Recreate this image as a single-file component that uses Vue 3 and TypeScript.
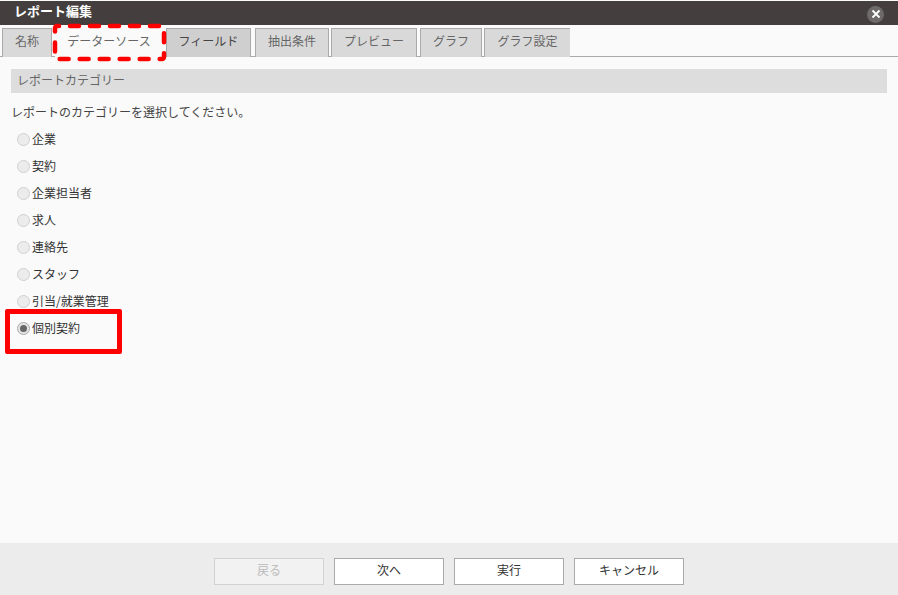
<script setup lang="ts">
const tabs: { label: string; active?: boolean; dark?: boolean; cls: string }[] = [
  { label: '名称', cls: 't1' },
  { label: 'データーソース', active: true, cls: 't2' },
  { label: 'フィールド', dark: true, cls: 't3' },
  { label: '抽出条件', cls: 't4' },
  { label: 'プレビュー', cls: 't5' },
  { label: 'グラフ', cls: 't6' },
  { label: 'グラフ設定', cls: 't7' },
]
const categories = ['企業', '契約', '企業担当者', '求人', '連絡先', 'スタッフ', '引当/就業管理', '個別契約']
const selected = '個別契約'
const buttons = [
  { label: '戻る', disabled: true },
  { label: '次へ' },
  { label: '実行' },
  { label: 'キャンセル' },
]
</script>

<template>
  <div class="dialog">
    <header class="titlebar">
      <span class="title">レポート編集</span>
      <button class="close" type="button" aria-label="閉じる">
        <svg width="10" height="10" viewBox="0 0 10 10">
          <path d="M1.5 1.5 8.5 8.5M8.5 1.5 1.5 8.5" stroke="#fff" stroke-width="1.8" fill="none" />
        </svg>
      </button>
    </header>

    <nav class="tabs">
      <div
        v-for="t in tabs"
        :key="t.label"
        class="tab"
        :class="[t.cls, { active: t.active, dark: t.dark }]"
      >{{ t.label }}</div>
    </nav>

    <main class="body">
      <h2 class="section">レポートカテゴリー</h2>
      <p class="lead">レポートのカテゴリーを選択してください。</p>
      <ul class="options">
        <li v-for="c in categories" :key="c" class="option">
          <span class="radio" :class="{ on: c === selected }"></span>
          <span class="opt-label">{{ c }}</span>
        </li>
      </ul>
    </main>

    <footer class="footer">
      <button
        v-for="b in buttons"
        :key="b.label"
        type="button"
        class="btn"
        :class="{ disabled: b.disabled }"
      >{{ b.label }}</button>
    </footer>

    <svg class="mark dashed" width="118" height="42" viewBox="0 0 118 42">
      <rect
        x="3"
        y="3"
        width="109"
        height="33"
        rx="2"
        fill="none"
        stroke="#f00"
        stroke-width="4.5"
        stroke-linecap="round"
        stroke-dasharray="9 11"
        stroke-dashoffset="7"
      />
    </svg>
    <div class="mark solid"></div>
  </div>
</template>

<style>
html, body { margin: 0; padding: 0; background: #fff; }
</style>

<style scoped>
.dialog {
  position: relative;
  width: 898px;
  height: 595px;
  display: flex;
  flex-direction: column;
  overflow: hidden;
  background: #fafafa;
  font-family: "Noto Sans CJK JP", "Noto Sans", sans-serif;
  font-size: 12px;
  color: #333;
}
.titlebar {
  margin-top: 1px;
  height: 24px;
  flex: none;
  background: #443f3e;
  display: flex;
  align-items: center;
  justify-content: space-between;
  padding: 0 14px 0 14px;
}
.title { color: #fff; font-size: 13px; font-weight: 700; line-height: 20px; margin-top: -4px; }
.close {
  width: 17px;
  height: 17px;
  padding: 0;
  border: 0;
  border-radius: 50%;
  background: #6e6a69;
  display: flex;
  align-items: center;
  justify-content: center;
  margin-top: 2px;
}
.tabs {
  flex: none;
  display: flex;
  align-items: flex-end;
  padding-left: 2px;
  background: #fafafa;
  border-bottom: 1px solid #aaa;
  box-sizing: border-box;
  height: 32px;
}
.tab {
  box-sizing: border-box;
  height: 29px;
  margin-bottom: -1px;
  border: 1px solid #aaa;
  border-bottom: 0;
  background: #d9d9d9;
  color: #666;
  font-size: 12px;
  line-height: 24px;
  text-align: center;
  flex: none;
}
.t1 { width: 50px; margin-right: 3px; }
.t2 { width: 111px; margin-right: 0; padding-right: 3px; }
.t3 { width: 85px; margin-right: 4px; }
.t4 { width: 74px; margin-right: 2px; }
.t5 { width: 86px; margin-right: 3px; }
.t6 { width: 62px; margin-right: 2px; }
.t7 { width: 86px; border-right: 0; }
.tab.active { background: #fafafa; border-color: transparent; color: #666; }
.tab.dark { background: #cfcfcf; color: #444; }

.body { flex: 1; padding: 12px 11px 0; min-height: 0; }
.section {
  margin: 0;
  height: 24px;
  background: #ddd;
  padding-left: 6px;
  font-size: 12px;
  font-weight: 400;
  line-height: 22px;
  color: #666;
}
.lead { margin: 8px 0 0; font-size: 12px; line-height: 22px; color: #444; }
.options { list-style: none; margin: 3px 0 0; padding: 0 0 0 6px; }
.option {
  height: 27px;
  display: flex;
  align-items: center;
  gap: 2px;
  font-size: 12px;
  color: #333;
}
.opt-label { padding-bottom: 2px; }
.radio {
  box-sizing: border-box;
  width: 13px;
  height: 13px;
  border-radius: 50%;
  border: 1px solid #d0d0d0;
  background: #ececec;
  display: flex;
  align-items: center;
  justify-content: center;
}
.radio.on { border-color: #aaa; background: #e4e4e4; }
.radio.on::after {
  content: "";
  width: 7px;
  height: 7px;
  border-radius: 50%;
  background: #666;
}
.footer {
  flex: none;
  height: 52px;
  box-sizing: border-box;
  padding: 15px 0 0 214px;
  background: #ececec;
  display: flex;
  align-items: flex-start;
  gap: 10px;
}
.btn {
  box-sizing: border-box;
  width: 110px;
  height: 27px;
  border: 1px solid #aaa;
  background: #fff;
  color: #333;
  font-family: inherit;
  font-size: 12px;
  line-height: 22px;
  padding: 0 0 3px;
}
.btn.disabled { background: #f2f2f2; border-color: #d2d2d2; color: #bbb; }

.mark { position: absolute; box-sizing: border-box; pointer-events: none; }
.dashed {
  left: 52px;
  top: 23px;
}
.solid {
  left: 5px;
  top: 309px;
  width: 117px;
  height: 45px;
  border: 5px solid #f00;
  border-radius: 2px;
}
</style>
